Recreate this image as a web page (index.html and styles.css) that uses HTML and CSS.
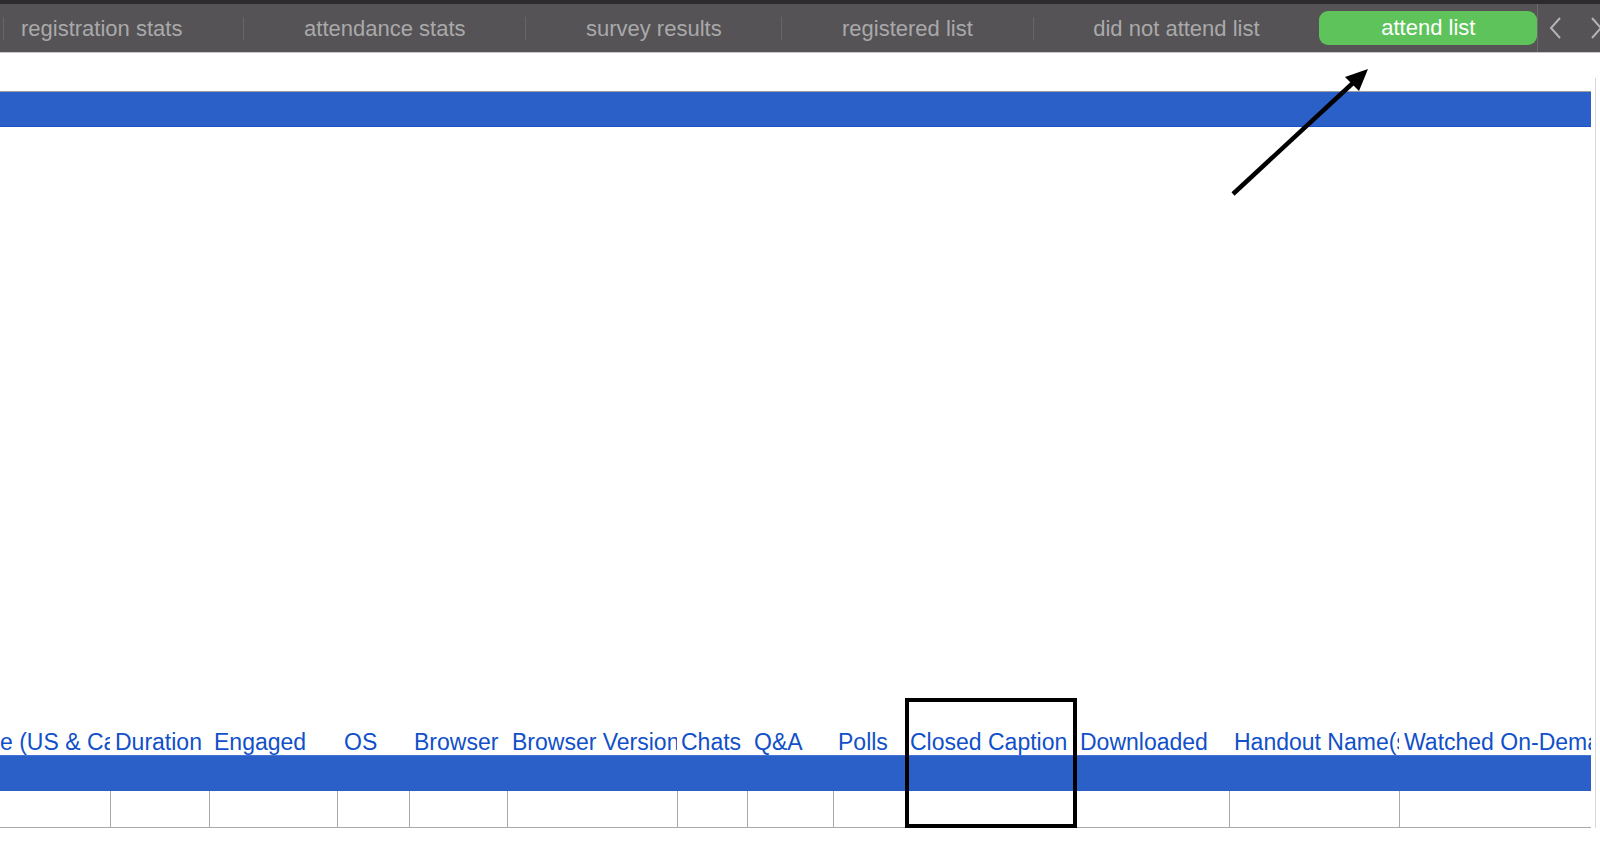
FILE: index.html
```html
<!DOCTYPE html>
<html lang="en">
<head>
    <meta charset="UTF-8">
    <meta name="viewport" content="width=device-width, initial-scale=1.0">
    <title>Attend List</title>
    <link rel="stylesheet" href="styles.css">
</head>
<body>
    <nav class="tabbar">
        <div class="tabs">
            <a class="tab first">registration stats</a>
            <a class="tab">attendance stats</a>
            <a class="tab">survey results</a>
            <a class="tab">registered list</a>
            <a class="tab">did not attend list</a>
            <a class="tab active">attend list</a>
        </div>
        <div class="tab-nav">
            <span class="chev">
                <svg width="14" height="22" viewBox="0 0 14 22"><path d="M12 1 L3 11 L12 21" fill="none" stroke="#b4b3b6" stroke-width="2"/></svg>
            </span>
            <span class="chev">
                <svg width="14" height="22" viewBox="0 0 14 22"><path d="M2 1 L11 11 L2 21" fill="none" stroke="#b4b3b6" stroke-width="2"/></svg>
            </span>
        </div>
    </nav>

    <div class="sheet">
        <div class="grid">
            <div class="top-gap"></div>
            <div class="band band-top"></div>
            <div class="blank"></div>

            <div class="cols head">
                <div class="cell">e (US &amp; Canada)</div>
                <div class="cell">Duration</div>
                <div class="cell">Engaged</div>
                <div class="cell os">OS</div>
                <div class="cell">Browser</div>
                <div class="cell">Browser Version</div>
                <div class="cell tight">Chats</div>
                <div class="cell os">Q&amp;A</div>
                <div class="cell">Polls</div>
                <div class="cell">Closed Caption</div>
                <div class="cell">Downloaded</div>
                <div class="cell">Handout Name(s)</div>
                <div class="cell">Watched On-Demand</div>
            </div>
            <div class="band band-row"></div>
            <div class="cols data">
                <div class="cell"></div>
                <div class="cell"></div>
                <div class="cell"></div>
                <div class="cell"></div>
                <div class="cell"></div>
                <div class="cell"></div>
                <div class="cell"></div>
                <div class="cell"></div>
                <div class="cell"></div>
                <div class="cell"></div>
                <div class="cell"></div>
                <div class="cell"></div>
                <div class="cell"></div>
            </div>
        </div>
        <div class="gutter"></div>
    </div>

    <!-- annotations drawn over the screenshot -->
    <svg class="arrow" width="180" height="160" viewBox="1220 55 180 160">
        <line x1="1233" y1="194" x2="1354" y2="82" stroke="#000" stroke-width="4.5"/>
        <polygon points="1368,69 1345,77 1359,91" fill="#000"/>
    </svg>
    <div class="highlight"></div>
</body>
</html>
```

FILE: styles.css
```css
body {
    margin: 0;
    font-family: "Liberation Sans", Arial, sans-serif;
    background: #fff;
    overflow: hidden;
    position: relative;
    width: 1600px;
    height: 851px;
}

.tabbar {
    display: flex;
    align-items: stretch;
    height: 48px;
    background: #555356;
    border-top: 4px solid #2c2b2e;
    border-bottom: 1px solid #c8c8c8;
    padding-left: 3px;
    overflow: hidden;
}

.tabs {
    display: flex;
    align-items: center;
}

.tab {
    flex-shrink: 0;
    height: 23px;
    line-height: 23px;
    padding: 0 59.7px;
    border-left: 1px solid #67656a;
    color: #a9a9aa;
    font-size: 22px;
    white-space: nowrap;
}

.tab.first {
    padding-left: 17px;
    padding-right: 61px;
}

.tab.active {
    height: 34px;
    line-height: 34px;
    padding: 0 62px;
    border-left: none;
    border-radius: 9px;
    background: #5ec35a;
    color: #fff;
}

.tab-nav {
    display: flex;
    align-items: center;
    gap: 28px;
    border-left: 1px solid #6b696d;
    padding-left: 10px;
}

.chev {
    display: flex;
}

.sheet {
    display: flex;
}

.grid {
    width: 1591px;
    flex-shrink: 0;
}

.top-gap {
    height: 38px;
}

.band {
    background: #2b60c8;
}

.band-top {
    height: 34px;
    border-top: 1px solid #9d9ea4;
    border-bottom: 1px solid #1a52c6;
}

.blank {
    height: 595px;
}

.cols {
    display: grid;
    grid-template-columns: 110px 99px 128px 72px 98px 170px 70px 86px 72px 170px 154px 170px 192px;
}

.head .cell {
    height: 33px;
    padding: 9px 0 0 5px;
    box-sizing: border-box;
    color: #1150c8;
    font-size: 23px;
    line-height: 1;
    white-space: nowrap;
    overflow: hidden;
}

.head .cell:first-child {
    padding-left: 0;
}

.head .cell.os {
    padding-left: 7px;
}

.head .cell.tight {
    padding-left: 4px;
}

.band-row {
    height: 35px;
    border-top: 1px solid #4374d4;
}

.data .cell {
    height: 36px;
    border-left: 1px solid #a9a9a9;
    border-bottom: 1px solid #a9a9a9;
}

.data .cell:first-child {
    border-left: none;
}

.gutter {
    flex: 1;
    margin: 25px 0 0 4px;
    border-left: 1px solid #d8d8d8;
}

.arrow {
    position: absolute;
    left: 1220px;
    top: 55px;
}

.highlight {
    position: absolute;
    left: 905px;
    top: 698px;
    width: 172px;
    height: 130px;
    border: 4px solid #000;
    box-sizing: border-box;
}
```
